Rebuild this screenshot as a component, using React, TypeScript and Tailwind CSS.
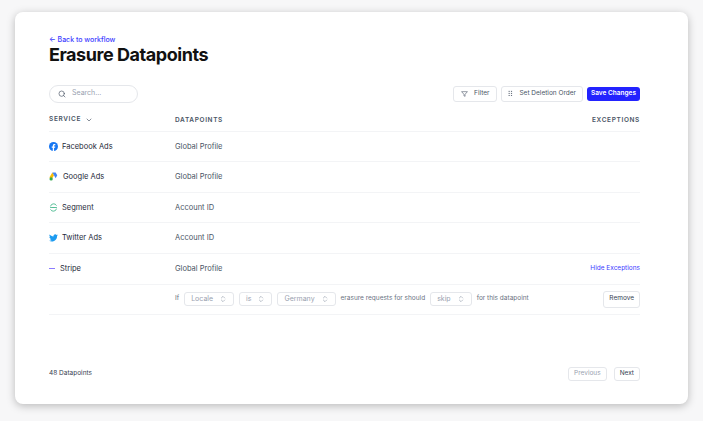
import { Search, ChevronDown, ChevronsUpDown } from "lucide-react";

const rows = [
  { name: "Facebook Ads", dp: "Global Profile", icon: "fb" },
  { name: "Google Ads", dp: "Global Profile", icon: "g" },
  { name: "Segment", dp: "Account ID", icon: "seg" },
  { name: "Twitter Ads", dp: "Account ID", icon: "tw" },
];

function Icon({ k }: { k: string }) {
  if (k === "fb")
    return (
      <svg width="9" height="9" viewBox="0 0 24 24"><circle cx="12" cy="12" r="12" fill="#1877f2" /><path d="M13.5 24v-8.5h2.8l.4-3.3h-3.2v-2c0-1 .3-1.6 1.6-1.6h1.7V5.6c-.3 0-1.3-.1-2.5-.1-2.5 0-4.2 1.5-4.2 4.3v2.4H7.3v3.3h2.8V24z" fill="#fff" /></svg>
    );
  if (k === "g")
    return (
      <svg width="10" height="9" viewBox="0 0 24 22"><path d="M8 1l-7 12 4 7 7-12z" fill="#fbbc04" /><path d="M16 1H8l8 14 4-7z" fill="#4285f4" /><circle cx="5" cy="17" r="4" fill="#34a853" /></svg>
    );
  if (k === "seg")
    return (
      <svg width="9" height="9" viewBox="0 0 24 24" fill="none" stroke="#52bd94" strokeWidth="2.5"><path d="M4 9a8.5 8.5 0 0 1 16-2M20 15a8.5 8.5 0 0 1-16 2M3 12h12M9 12h12" /></svg>
    );
  return (
    <svg width="9" height="8" viewBox="0 0 24 20"><path d="M24 2.4c-.9.4-1.8.7-2.8.8 1-.6 1.8-1.6 2.2-2.700-1 .6-2 1-3.1 1.2A4.9 4.9 0 0 0 11.9 6C7.8 5.8 4.2 3.9 1.7.9.4 3.2 1.1 6 3.2 7.5c-.8 0-1.6-.3-2.2-.6 0 2.4 1.700 4.4 3.9 4.8-.7.2-1.5.2-2.2.1.6 2 2.4 3.4 4.6 3.4A9.9 9.9 0 0 1 0 17.2 14 14 0 0 0 7.5 19.4c9.1 0 14.3-7.7 14-14.6 1-.7 1.8-1.5 2.5-2.4z" fill="#1d9bf0" /></svg>
  );
}

function Sel({ v }: { v: string }) {
  return (
    <span className="flex h-[14px] items-center gap-1.5 rounded-[3px] border border-gray-200 px-1.5 text-[7px] text-gray-400">
      {v}
      <ChevronsUpDown className="h-2 w-2" />
    </span>
  );
}

export default function App() {
  return (
    <div className="min-h-[421px] bg-[#f7f7f8] px-[15px] pt-[12px] pb-[17px]" style={{ fontFamily: "Inter, 'Liberation Sans', sans-serif" }}>
      <div className="h-[392px] rounded-lg bg-white pl-[34px] pr-[48px] pt-[23px] shadow-[0_2px_8px_rgba(0,0,0,0.25)] flex flex-col">
        <a className="text-[7px] font-medium text-[#3b3bff]">← Back to workflow</a>
        <h1 className="-mt-[1px] text-[18px] font-bold leading-[20px] tracking-tight text-[#111]">Erasure Datapoints</h1>
        <div className="mt-[20px] flex items-center justify-between">
          <div className="flex h-[18px] w-[89px] items-center gap-1.5 rounded-full border border-gray-200 px-2 text-[7px] text-gray-400">
            <Search className="h-2 w-2 text-gray-600" /> Search...
          </div>
          <div className="flex items-center gap-[4px]">
            <button className="flex h-[16px] items-center gap-1.5 rounded-[3px] border border-gray-200 px-[7px] text-[6.5px] text-gray-600">
              <svg width="7" height="6" viewBox="0 0 24 20" fill="none" stroke="currentColor" strokeWidth="2"><path d="M2 2h20l-8 9v7l-4-2v-5z" /></svg>Filter
            </button>
            <button className="flex h-[16px] items-center gap-1 rounded-[3px] border border-gray-200 px-[6px] text-[6.5px] text-gray-600">
              <svg width="7" height="7" viewBox="0 0 24 24" fill="currentColor"><rect x="2" y="3" width="4" height="3" /><rect x="2" y="10" width="4" height="3" /><rect x="2" y="17" width="4" height="3" /><rect x="10" y="3" width="4" height="3" /><rect x="10" y="10" width="4" height="3" /><rect x="10" y="17" width="4" height="3" /></svg>
              Set Deletion Order
            </button>
            <button className="h-[14px] rounded-[3px] bg-[#2323ff] px-[4px] text-[6.5px] font-semibold text-white">Save Changes</button>
          </div>
        </div>
        <div className="mt-[6px] flex h-[23px] items-center border-b border-gray-100 text-[6.5px] font-semibold tracking-[0.1em] text-gray-600">
          <span className="flex w-[126px] items-center gap-1">SERVICE <ChevronDown className="h-2 w-2" /></span>
          <span className="flex-1 pt-[2px]">DATAPOINTS</span>
          <span className="pt-[2px]">EXCEPTIONS</span>
        </div>
        {rows.map((r) => (
          <div key={r.name} className="flex h-[30.5px] items-center border-b border-gray-100 text-[7.5px]">
            <span className="flex w-[126px] items-center gap-[4px] text-gray-800"><Icon k={r.icon} />{r.name}</span>
            <span className="text-gray-600">{r.dp}</span>
          </div>
        ))}
        <div className="flex h-[31px] items-center border-b border-gray-100 text-[7.5px]">
          <span className="flex w-[126px] items-center gap-[5px] text-gray-800"><span className="h-[1.5px] w-[6px] bg-[#8b7cff]" />Stripe</span>
          <span className="flex-1 text-gray-600">Global Profile</span>
          <span className="text-[6.5px] text-[#3b3bff]">Hide Exceptions</span>
        </div>
        <div className="flex h-[30px] items-center border-b border-gray-100 pl-[126px] text-[6.5px] text-gray-500">
          <span className="mr-[5px]">If</span>
          <div className="flex items-center gap-[5px]">
            <Sel v="Locale" /><Sel v="is" /><Sel v="Germany" />
            <span>erasure requests for should</span>
            <Sel v="skip" />
            <span>for this datapoint</span>
          </div>
          <button className="ml-auto h-[17px] rounded-[3px] border border-gray-200 px-[5px] text-[6.5px] text-gray-700">Remove</button>
        </div>
        <div className="mt-auto mb-[23px] flex items-center justify-between text-[6.5px]">
          <span className="text-gray-700">48 Datapoints</span>
          <div className="flex gap-[7px]">
            <button className="h-[14px] rounded-[3px] border border-gray-200 px-[5px] text-gray-400">Previous</button>
            <button className="h-[14px] rounded-[3px] border border-gray-200 px-[5px] text-gray-700">Next</button>
          </div>
        </div>
      </div>
    </div>
  );
}
